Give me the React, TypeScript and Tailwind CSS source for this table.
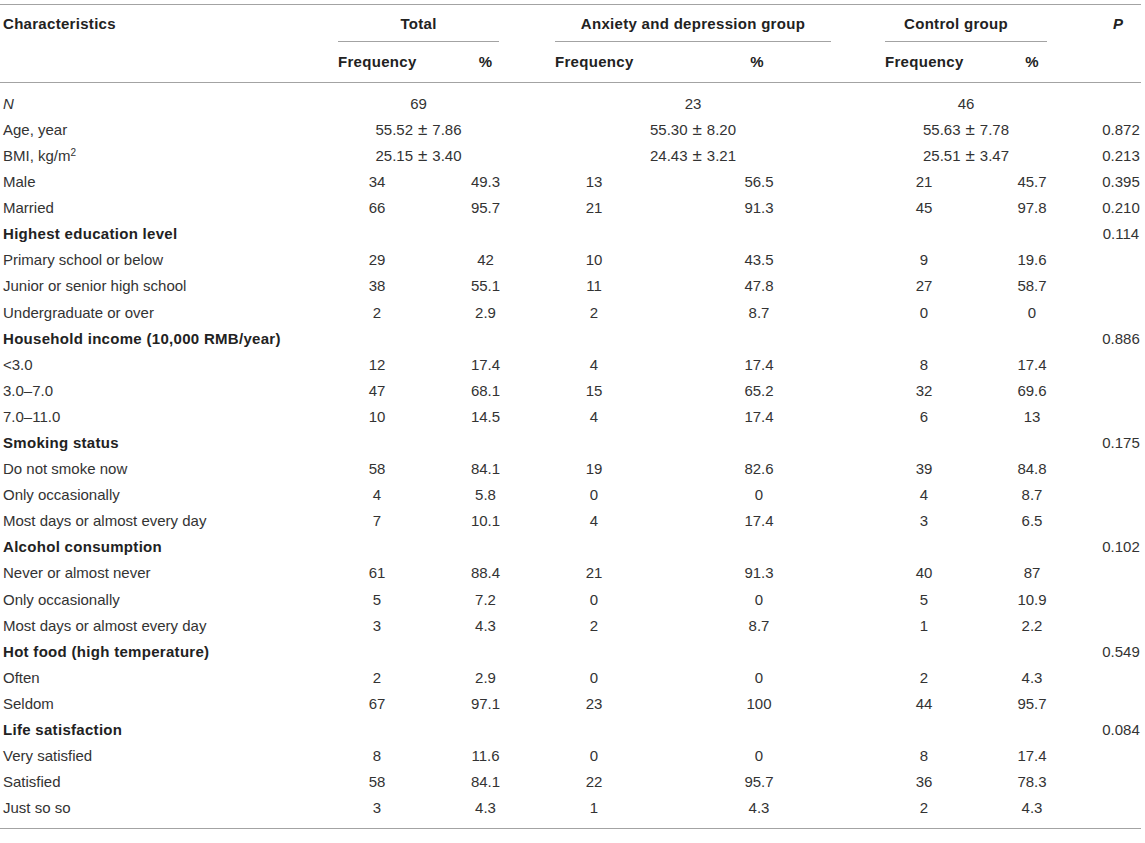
import React from "react";

type Row = {
  label: React.ReactNode;
  bold?: boolean;
  merged?: string[];
  cells?: string[];
  p?: string;
};

const cols = "grid grid-cols-[338px_78px_139px_78px_252px_78px_138px_40px]";

const rows: Row[] = [
  { label: <i>N</i>, merged: ["69", "23", "46"] },
  { label: "Age, year", merged: ["55.52 ± 7.86", "55.30 ± 8.20", "55.63 ± 7.78"], p: "0.872" },
  {
    label: (
      <>
        BMI, kg/m<sup className="text-[10px]">2</sup>
      </>
    ),
    merged: ["25.15 ± 3.40", "24.43 ± 3.21", "25.51 ± 3.47"],
    p: "0.213",
  },
  { label: "Male", cells: ["34", "49.3", "13", "56.5", "21", "45.7"], p: "0.395" },
  { label: "Married", cells: ["66", "95.7", "21", "91.3", "45", "97.8"], p: "0.210" },
  { label: "Highest education level", bold: true, p: "0.114" },
  { label: "Primary school or below", cells: ["29", "42", "10", "43.5", "9", "19.6"] },
  { label: "Junior or senior high school", cells: ["38", "55.1", "11", "47.8", "27", "58.7"] },
  { label: "Undergraduate or over", cells: ["2", "2.9", "2", "8.7", "0", "0"] },
  { label: "Household income (10,000 RMB/year)", bold: true, p: "0.886" },
  { label: "<3.0", cells: ["12", "17.4", "4", "17.4", "8", "17.4"] },
  { label: "3.0–7.0", cells: ["47", "68.1", "15", "65.2", "32", "69.6"] },
  { label: "7.0–11.0", cells: ["10", "14.5", "4", "17.4", "6", "13"] },
  { label: "Smoking status", bold: true, p: "0.175" },
  { label: "Do not smoke now", cells: ["58", "84.1", "19", "82.6", "39", "84.8"] },
  { label: "Only occasionally", cells: ["4", "5.8", "0", "0", "4", "8.7"] },
  { label: "Most days or almost every day", cells: ["7", "10.1", "4", "17.4", "3", "6.5"] },
  { label: "Alcohol consumption", bold: true, p: "0.102" },
  { label: "Never or almost never", cells: ["61", "88.4", "21", "91.3", "40", "87"] },
  { label: "Only occasionally", cells: ["5", "7.2", "0", "0", "5", "10.9"] },
  { label: "Most days or almost every day", cells: ["3", "4.3", "2", "8.7", "1", "2.2"] },
  { label: "Hot food (high temperature)", bold: true, p: "0.549" },
  { label: "Often", cells: ["2", "2.9", "0", "0", "2", "4.3"] },
  { label: "Seldom", cells: ["67", "97.1", "23", "100", "44", "95.7"] },
  { label: "Life satisfaction", bold: true, p: "0.084" },
  { label: "Very satisfied", cells: ["8", "11.6", "0", "0", "8", "17.4"] },
  { label: "Satisfied", cells: ["58", "84.1", "22", "95.7", "36", "78.3"] },
  { label: "Just so so", cells: ["3", "4.3", "1", "4.3", "2", "4.3"] },
];

const mergedMargins = ["mr-[56px]", "mr-[54px]", "mr-[54px]"];

// mean ± sd, with a wider plus-minus like the source
const MeanSd = ({ value }: { value: string }) => {
  if (!value.includes("±")) return <>{value}</>;
  const [a, b] = value.split("±").map((s) => s.trim());
  return (
    <>
      {a}
      <span className="mx-[5px] text-[17px] leading-none">±</span>
      {b}
    </>
  );
};

const App = () => {
  return (
    <div className="bg-white min-h-[843px] pt-[4px] text-[15px] text-[#333] font-['Liberation_Sans',Arial,sans-serif]">
      <div className="w-[1141px] border-t border-b border-[#a3a3a3]">
        {/* header */}
        <div className="border-b border-[#a3a3a3]">
          <div className={`${cols} h-[37px]`}>
            <div className="pl-[3px] pt-[2px] flex items-center font-bold tracking-[0.3px] text-[#222]">
              Characteristics
            </div>
            <div className="col-span-2 flex">
              <div className="mr-[56px] flex-1 flex items-center justify-center pt-[2px] font-bold tracking-[0.3px] text-[#222] border-b border-[#a3a3a3]">
                Total
              </div>
            </div>
            <div className="col-span-2 flex">
              <div className="mr-[54px] flex-1 flex items-center justify-center pt-[2px] font-bold tracking-[0.3px] text-[#222] border-b border-[#a3a3a3]">
                Anxiety and depression group
              </div>
            </div>
            <div className="col-span-2 flex">
              <div className="mr-[54px] flex-1 flex items-center justify-center pt-[2px] pr-[20px] font-bold tracking-[0.3px] text-[#222] border-b border-[#a3a3a3]">
                Control group
              </div>
            </div>
            <div className="flex items-center justify-center pt-[2px] pr-[6px] font-bold italic text-[#222]">
              P
            </div>
          </div>
          <div className={`${cols} h-[40px] items-center font-bold tracking-[0.3px] text-[#222]`}>
            <div />
            <div>Frequency</div>
            <div className="text-center">%</div>
            <div>Frequency</div>
            <div className="text-center pr-[4px]">%</div>
            <div>Frequency</div>
            <div className="text-center">%</div>
            <div />
          </div>
        </div>

        {/* body */}
        <div className="pt-[8px] pb-[6px]">
          {rows.map((row, index) => (
            <div key={index} className={`${cols} h-[26.1px] items-center`}>
              <div
                className={`pl-[3px] whitespace-nowrap ${
                  row.bold ? "font-bold tracking-[0.3px] text-[#222]" : ""
                }`}
              >
                {row.label}
              </div>
              {row.merged
                ? row.merged.map((m, i) => (
                    <div key={i} className="col-span-2 flex">
                      <div className={`flex-1 text-center ${mergedMargins[i]}`}>
                        <MeanSd value={m} />
                      </div>
                    </div>
                  ))
                : row.cells
                ? row.cells.map((c, i) => (
                    <div key={i} className="text-center">
                      {c}
                    </div>
                  ))
                : <div className="col-span-6" />}
              <div className="text-center">{row.p ?? ""}</div>
            </div>
          ))}
        </div>
      </div>
    </div>
  );
};

export default App;
